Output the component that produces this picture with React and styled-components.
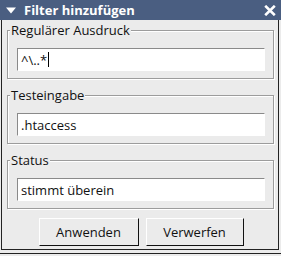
import React from "react";
import styled, { createGlobalStyle } from "styled-components";

const Global = createGlobalStyle`
  html, body { margin: 0; padding: 0; background: #ebebeb; }
  body { font-family: "Open Sans", "Liberation Sans", sans-serif; }
`;

const Page = styled.div`
  width: 281px;
  height: 256px;
  display: flex;
  flex-direction: column;
  background: #ebebeb;
`;

const TitleBar = styled.div`
  height: 20px;
  background: #4a5e81;
  color: #fff;
  display: flex;
  align-items: center;
  padding: 0 5px 0 6px;
  font-weight: bold;
  font-size: 13px;
  gap: 8px;
  box-sizing: border-box;
`;

const Title = styled.span`
  flex: 1;
  line-height: 20px;
`;

const Body = styled.div`
  height: 230px;
  box-sizing: border-box;
  margin: 0 2px 0 1px;
  border-left: 1px solid #222;
  border-right: 1px solid #222;
  border-bottom: 1px solid #222;
  padding: 10px 4px 0 5px;
  display: flex;
  flex-direction: column;
  gap: 16px;
`;

const BottomLine = styled.div`
  margin-top: 3px;
  height: 1px;
  background: #222;
`;

const Group = styled.div`
  position: relative;
  padding: 17px 8px 7px 9px;
  border: 1px solid #9c9c9c;
  box-shadow: inset 1px 1px 0 #fff, 1px 1px 0 #fff;
`;

const Legend = styled.span`
  position: absolute;
  top: -9px;
  left: 2px;
  background: #ebebeb;
  font-size: 13px;
  color: #111;
  padding: 0 1px;
  line-height: 16px;
`;

const Field = styled.div`
  height: 21px;
  background: #fff;
  border-top: 1px solid #8a8a8a;
  border-left: 1px solid #8a8a8a;
  border-bottom: 1px solid #fff;
  border-right: 1px solid #fff;
  font-size: 13px;
  color: #111;
  display: flex;
  align-items: center;
  padding-left: 3px;
`;

const Caret = styled.span`
  display: inline-block;
  width: 1px;
  height: 15px;
  background: #000;
  margin-left: 1px;
`;

const Buttons = styled.div`
  display: flex;
  justify-content: center;
  gap: 7px;
  margin-top: -7px;
  padding-left: 1px;
`;

const Button = styled.button`
  width: ${(p) => p.$w}px;
  height: 28px;
  box-sizing: border-box;
  background: #ebebeb;
  border-top: 1px solid #fff;
  border-left: 1px solid #fff;
  border-right: 1px solid #111;
  border-bottom: 1px solid #111;
  font-family: "Open Sans", "Liberation Sans", sans-serif;
  font-size: 13px;
  color: #111;
  padding: 0;
`;

const Close = () => (
  <svg width="12" height="11" viewBox="0 0 12 11">
    <path d="M1.2 0.8 L10.8 10.2 M10.8 0.8 L1.2 10.2" stroke="#fff" strokeWidth="2.6" />
  </svg>
);

const Arrow = () => (
  <svg width="10" height="7" viewBox="0 0 10 7">
    <path d="M0 0.5 L10 0.5 L5 6.5 Z" fill="#fff" />
  </svg>
);

export default function App() {
  return (
    <>
      <Global />
      <Page>
        <TitleBar>
          <Arrow />
          <Title>Filter hinzufügen</Title>
          <Close />
        </TitleBar>
        <Body>
          <Group>
            <Legend>Regulärer Ausdruck</Legend>
            <Field>^\..*<Caret /></Field>
          </Group>
          <Group>
            <Legend>Testeingabe</Legend>
            <Field>.htaccess</Field>
          </Group>
          <Group>
            <Legend>Status</Legend>
            <Field>stimmt überein</Field>
          </Group>
          <Buttons>
            <Button $w={100}>Anwenden</Button>
            <Button $w={98}>Verwerfen</Button>
          </Buttons>
        </Body>
        <BottomLine />
      </Page>
    </>
  );
}
